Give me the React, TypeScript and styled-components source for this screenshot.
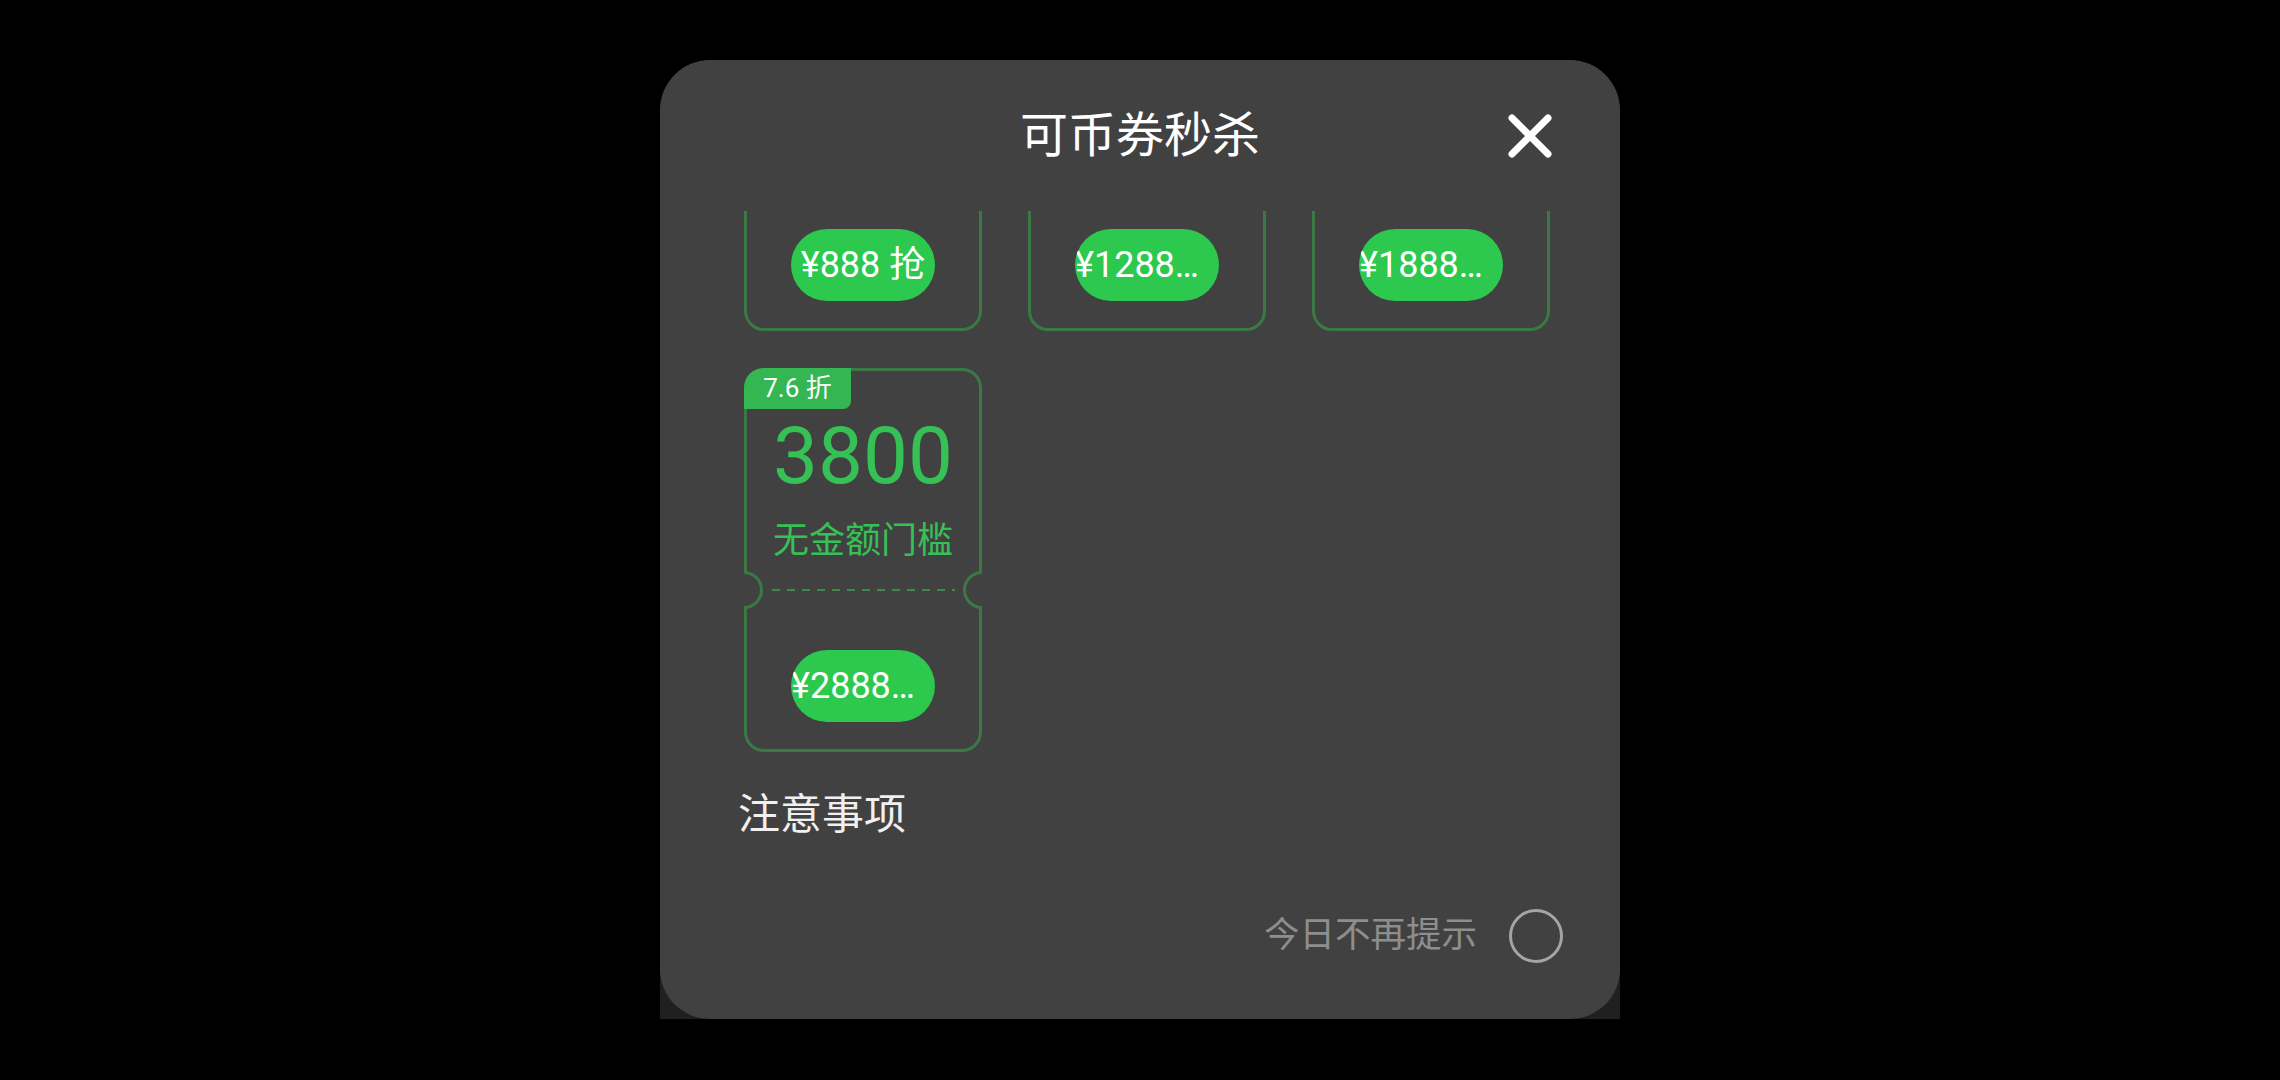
import React, { useLayoutEffect, useRef } from "react";
import styled, { createGlobalStyle } from "styled-components";

const GlobalStyle = createGlobalStyle`
  html, body {
    margin: 0;
    padding: 0;
    background: #000;
    width: 2280px;
    height: 1080px;
    overflow: hidden;
  }
  body {
    font-family: Roboto, "Noto Sans CJK SC", "Noto Sans", sans-serif;
  }
  * { box-sizing: border-box; }
`;

const Page = styled.div`
  width: 2280px;
  height: 1080px;
  display: flex;
  justify-content: center;
  padding-top: 60px;
`;

const Backdrop = styled.div`
  width: 960px;
  height: 959px;
  background: linear-gradient(to bottom, transparent 60%, #202020 60%);
`;

const Dialog = styled.div`
  width: 960px;
  height: 959px;
  background: #414141;
  border-radius: 50px;
  display: flex;
  flex-direction: column;
  overflow: hidden;
`;

const Header = styled.div`
  height: 151px;
  flex: none;
  display: grid;
  grid-template-columns: 1fr auto 1fr;
  align-items: center;
`;

const Title = styled.div`
  grid-column: 2;
  color: #fff;
  font-size: 48px;
  line-height: 1;
`;

const CloseButton = styled.button`
  grid-column: 3;
  justify-self: end;
  margin-right: 68px;
  width: 44px;
  height: 44px;
  padding: 0;
  border: none;
  background: transparent;
  display: flex;
  cursor: pointer;
`;

const Body = styled.div`
  flex: 1;
  min-height: 0;
  overflow-y: auto;
  scrollbar-width: none;
  &::-webkit-scrollbar { display: none; }
`;

const Content = styled.div`
  padding-bottom: 90px;
`;

const Grid = styled.div`
  display: grid;
  grid-template-columns: repeat(3, 238px);
  column-gap: 46px;
  row-gap: 37px;
  margin-left: 84px;
`;

const Card = styled.div`
  position: relative;
  width: 238px;
  height: 384px;
  border: 3px solid #3b7844;
  border-radius: 20px;
  display: flex;
  flex-direction: column;
  align-items: center;
  padding-top: 45px;
`;

const Notch = styled.span<{ $side: "left" | "right" }>`
  position: absolute;
  top: ${222 - 3 - 19}px;
  ${(p) => (p.$side === "left" ? "left: -22px;" : "right: -22px;")}
  width: 38px;
  height: 38px;
  border-radius: 50%;
  border: 3px solid #3b7844;
  background: #414141;
  clip-path: ${(p) => (p.$side === "left" ? "inset(0 0 0 19px)" : "inset(0 19px 0 0)")};
`;

const Badge = styled.div`
  position: absolute;
  top: -3px;
  left: -3px;
  width: 107px;
  height: 41px;
  background: #34b753;
  color: #fff;
  border-radius: 20px 0 8px 0;
  font-size: 26px;
  line-height: 41px;
  text-align: center;
`;

const Amount = styled.div`
  color: #35c155;
  font-size: 80px;
  line-height: 1;
`;

const Condition = styled.div`
  color: #35c155;
  font-size: 36px;
  line-height: 1;
  margin-top: 27px;
`;

const Divider = styled.div`
  width: 183px;
  height: 2px;
  margin-top: 30px;
  background: repeating-linear-gradient(
    to right,
    #3f8a4b 0 8px,
    transparent 8px 15px
  );
`;

const BuyButton = styled.button`
  margin-top: 59px;
  width: 144px;
  height: 72px;
  border-radius: 36px;
  border: none;
  padding: 0;
  background: #2dc84e;
  color: #fff;
  font-family: inherit;
  font-size: 36px;
  line-height: 72px;
  text-align: center;
  white-space: nowrap;
  overflow: hidden;
  text-overflow: ellipsis;
  cursor: pointer;
`;

const BuySuffix = styled.span`
  display: inline-block;
  white-space: pre;
`;

const NotesTitle = styled.div`
  margin: 42px 0 0 78px;
  color: #f0f0f0;
  font-size: 42px;
  line-height: 1;
`;

const Footer = styled.div`
  flex: none;
  display: flex;
  justify-content: flex-end;
  align-items: center;
  gap: 32px;
  padding: 0 57px 56px 0;
`;

const FooterText = styled.span`
  color: #8e8e8e;
  font-size: 35.5px;
  line-height: 1;
`;

const Radio = styled.span`
  width: 54px;
  height: 54px;
  border-radius: 50%;
  border: 3px solid #a5a5a5;
  flex: none;
`;

type Coupon = { discount: string; amount: string; price: string };

const coupons: Coupon[] = [
  { discount: "8.9 折", amount: "1000", price: "¥888" },
  { discount: "8.6 折", amount: "1500", price: "¥1288" },
  { discount: "8.6 折", amount: "2200", price: "¥1888" },
  { discount: "7.6 折", amount: "3800", price: "¥2888" },
];

const CloseIcon = () => (
  <svg width="44" height="44" viewBox="0 0 44 44">
    <path
      d="M4 4 L40 40 M40 4 L4 40"
      stroke="#fff"
      strokeWidth="7"
      strokeLinecap="round"
      fill="none"
    />
  </svg>
);

export default function App() {
  const bodyRef = useRef<HTMLDivElement>(null);
  useLayoutEffect(() => {
    if (bodyRef.current) bodyRef.current.scrollTop = 264;
  }, []);

  return (
    <>
      <GlobalStyle />
      <Page>
        <Backdrop>
          <Dialog>
            <Header>
              <Title>可币券秒杀</Title>
              <CloseButton aria-label="关闭">
                <CloseIcon />
              </CloseButton>
            </Header>
            <Body ref={bodyRef}>
              <Content>
                <Grid>
                  {coupons.map((c) => (
                    <Card key={c.amount}>
                      <Badge>{c.discount}</Badge>
                      <Notch $side="left" />
                      <Notch $side="right" />
                      <Amount>{c.amount}</Amount>
                      <Condition>无金额门槛</Condition>
                      <Divider />
                      <BuyButton>
                        {c.price}
                        <BuySuffix>{" 抢"}</BuySuffix>
                      </BuyButton>
                    </Card>
                  ))}
                </Grid>
                <NotesTitle>注意事项</NotesTitle>
              </Content>
            </Body>
            <Footer>
              <FooterText>今日不再提示</FooterText>
              <Radio />
            </Footer>
          </Dialog>
        </Backdrop>
      </Page>
    </>
  );
}
